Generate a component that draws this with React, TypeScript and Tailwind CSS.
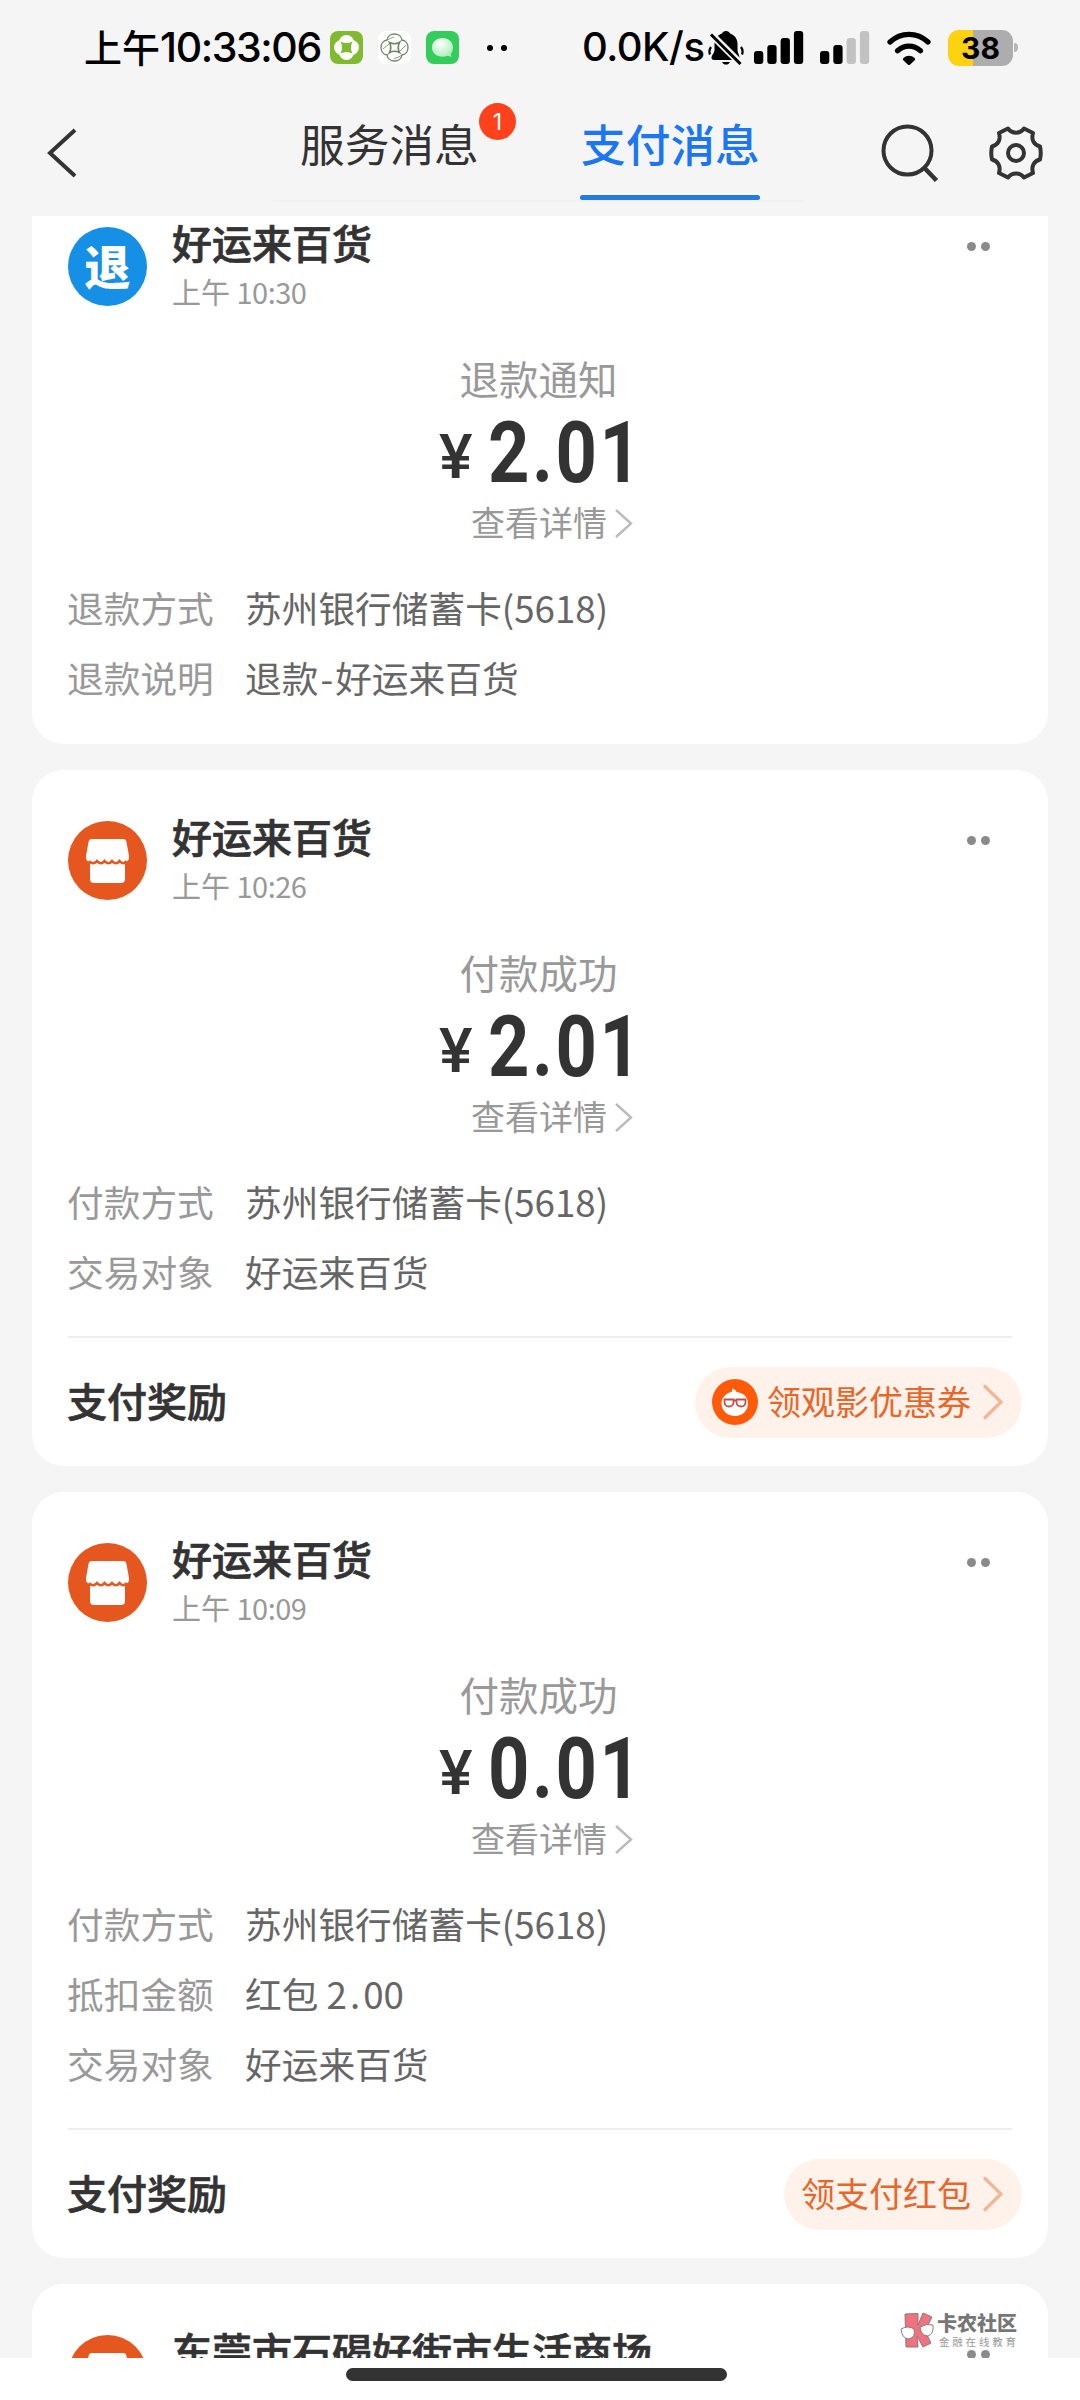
import React from 'react';

interface DetailRow {
  label: string;
  value: string;
}

interface Message {
  kind: 'refund' | 'shop';
  title: string;
  time: string;
  status: string;
  amount: string;
  rows: DetailRow[];
  reward?: { text: string; withLogo?: boolean };
}

const CARD = '苏州银行储蓄卡(5618)';
const SHOP = '好运来百货';

const messages: Message[] = [
  {
    kind: 'refund',
    title: SHOP,
    time: '10:30',
    status: '退款通知',
    amount: '2.01',
    rows: [
      { label: '退款方式', value: CARD },
      { label: '退款说明', value: '退款-好运来百货' },
    ],
  },
  {
    kind: 'shop',
    title: SHOP,
    time: '10:26',
    status: '付款成功',
    amount: '2.01',
    rows: [
      { label: '付款方式', value: CARD },
      { label: '交易对象', value: SHOP },
    ],
    reward: { text: '领观影优惠券', withLogo: true },
  },
  {
    kind: 'shop',
    title: SHOP,
    time: '10:09',
    status: '付款成功',
    amount: '0.01',
    rows: [
      { label: '付款方式', value: CARD },
      { label: '抵扣金额', value: '红包 2.00' },
      { label: '交易对象', value: SHOP },
    ],
    reward: { text: '领支付红包' },
  },
];

const SignalBars: React.FC<{ level: number }> = ({ level }) => (
  <svg width="50" height="34" viewBox="0 0 50 34">
    {[13, 19, 26, 33].map((h, i) => (
      <rect key={h} x={i * 13.3} y={33 - h} width="9.3" height={h} rx="3" fill={i < level ? '#000' : '#c2c2c2'} />
    ))}
  </svg>
);

const StatusBar = () => (
  <div className="flex h-[95px] shrink-0 items-center pl-[84px] text-black">
    <div className="flex w-[246px] items-center whitespace-nowrap font-medium">
      <span className="pb-[4px] text-[38px] leading-[48px]">上午</span>
      <span className="pb-[1px] font-['Inter'] text-[41px] leading-[48px] tracking-[-1.4px]">10:33:06</span>
    </div>
    <svg width="33" height="33" viewBox="0 0 33 33">
      <rect width="33" height="33" rx="8" fill="#80bb2f" />
      <circle cx="16.500" cy="11.500" r="7.500" fill="#fff" />
      <circle cx="16.500" cy="21.500" r="7.500" fill="#fff" />
      <circle cx="11.500" cy="16.500" r="7.500" fill="#fff" />
      <circle cx="21.500" cy="16.500" r="7.500" fill="#fff" />
      <path d="M10.500 10.500q6 3 12 0q-3 6 0 12q-6-3-12 0q3-6 0-12z" fill="#80bb2f" />
    </svg>
    <svg className="ml-[15px]" width="33" height="33" viewBox="0 0 33 33">
      <rect width="33" height="33" rx="8" fill="#fff" />
      <g fill="none" stroke="#6d8560" strokeWidth="1.300">
        <path d="M9 9C10 1 23 1 24 9C32 10 32 23 24 24C23 32 10 32 9 24C1 23 1 10 9 9z" />
        <path d="M11.500 11.500q5 2.500 10 0q-2.500 5 0 10q-5-2.500-10 0q2.500-5 0-10z" strokeWidth="1.600" />
        <path d="M9 9q4-2 7-3M24 9l-4 3M9 24l4-3M24 24q-4 3-8 3.500M5 18l6-5M28 14l-6 6" strokeWidth=".8" />
      </g>
    </svg>
    <svg className="ml-[15px]" width="33" height="33" viewBox="0 0 33 33">
      <defs>
        <radialGradient id="bubble" cx=".4" cy=".3" r=".8">
          <stop offset="0" stopColor="#fff" />
          <stop offset="1" stopColor="#a5ecb4" />
        </radialGradient>
      </defs>
      <rect width="33" height="33" rx="8" fill="#33cd5c" />
      <path d="M16.500 7c6 0 10.500 4 10.500 9.500 0 2.500-.8 4.600-2.200 6.200l.7 3.300-3.800-1.200c-1.500.6-3.300 1-5.200 1C10.500 25.800 6 22 6 16.500S10.500 7 16.500 7z" fill="url(#bubble)" />
    </svg>
    <div className="ml-[28px] flex gap-[8px]">
      <span className="size-[6px] rounded-full bg-black" />
      <span className="size-[6px] rounded-full bg-black" />
    </div>
    <span className="ml-[75px] w-[126px] whitespace-nowrap pb-[1px] font-['Inter'] text-[40px] leading-[48px] font-medium tracking-[-0.5px]">0.0K/s</span>
    <svg className="shrink-0" width="36" height="34" viewBox="0 0 36 34">
      <path d="M18 0c2 0 3.400 1 4 2.600C27 4.500 29.500 8 29.500 13v6c0 3 2 5 2 7.500 0 1.500-.8 2.500-2.500 2.500H6C4.300 29 3.500 28 3.500 26.500 3.500 24 6.500 22 6.500 19v-6c0-5 2.500-8.500 7.500-10.400C14.600 1 16 0 18 0zM14 31h8c-.8 1.600-2.200 2.600-4 2.600s-3.200-1-4-2.600z" />
      <path d="M3 16c-1.800 2.500-2 5-1 7.500M33 16c1.800 2.500 2 5 1 7.500" stroke="#000" strokeWidth="2.200" fill="none" />
      <path d="M2 2l32 32" stroke="#f5f5f5" strokeWidth="7" />
      <path d="M3 3.500l29.500 29.500" stroke="#000" strokeWidth="3" />
    </svg>
    <div className="ml-[10px] flex shrink-0 gap-[16px]">
      <SignalBars level={4} />
      <SignalBars level={2} />
    </div>
    <svg className="ml-[17px] shrink-0" width="44" height="34" viewBox="0 0 44 34">
      <g fill="none" stroke="#000" strokeWidth="5.200" strokeLinecap="round">
        <path d="M3 11c11-10.200 27-10.200 38 0" />
        <path d="M10.500 19.800c7-6.200 16-6.200 23 0" />
      </g>
      <path d="M16.500 27c3.500-3 7.500-3 11 0 .8.800.8 1.600.2 2.300l-4.200 4c-1 1-2 1-3 0l-4.200-4c-.6-.7-.6-1.500.2-2.300z" />
    </svg>
    <div className="ml-[17px] flex h-[36px] w-[65px] shrink-0 items-center justify-center rounded-[11px] bg-linear-to-r from-[#fdd20f] from-38% to-[#adadad] to-38%">
      <span className="font-['Inter'] text-[30px] leading-[36px] font-bold">38</span>
    </div>
    <span className="ml-[1px] h-[9px] w-[4px] rounded-r-full bg-[#b5b5b5]" />
  </div>
);

const NavBar = () => (
  <div className="flex h-[121px] shrink-0 items-start whitespace-nowrap">
    <svg className="mt-[33px] ml-[46px] w-[32px]" height="50" viewBox="0 0 32 50">
      <path d="M29 2L4 25l25 23" fill="none" stroke="#333" strokeWidth="4" />
    </svg>
    <div className="ml-[195px] flex w-[530px] border-b-2 border-[#f1f1f1] pl-[27px] text-[44.700px]">
      <div className="relative h-[105px] w-[180px] pt-[15px] leading-[66px] text-[#333]">
        服务消息
        <span className="absolute top-[8px] left-[179px] flex size-[37px] items-center justify-center rounded-full bg-[#ff411c] font-['Inter'] text-[23px] text-white">1</span>
      </div>
      <div className="ml-[100px] flex h-[105px] w-[180px] flex-col justify-between pt-[15px] text-[#1a76f2]">
        <span className="pl-[1px] leading-[66px] font-medium">支付消息</span>
        <span className="h-[5px] rounded-full bg-[#247bdd]" />
      </div>
    </div>
    <svg className="mt-[28px] ml-[78px]" width="60" height="60" viewBox="0 0 60 60">
      <circle cx="26.500" cy="27.500" r="24" fill="none" stroke="#333" strokeWidth="4" />
      <path d="M43.500 45l12 12.500" stroke="#333" strokeWidth="4.500" />
    </svg>
    <svg className="mt-[29px] ml-[46px]" width="58" height="58" viewBox="-29 -29 58 58" fill="none" stroke="#333" strokeWidth="4" strokeLinejoin="round">
      <path d="M-8-24.500C-4-19 4-19 8-24.500L17-20C15-13 18-8 24-6.500Q25.500 0 24 6.500C18 8 15 13 17 20L8 24.500C4 19-4 19-8 24.500L-17 20C-15 13-18 8-24 6.500Q-25.500 0-24-6.500C-18-8-15-13-17-20z" />
      <circle r="8" />
    </svg>
  </div>
);

const Avatar: React.FC<{ kind: Message['kind'] }> = ({ kind }) =>
  kind === 'refund' ? (
    <div className="mt-[51px] flex size-[79px] items-center justify-center rounded-full bg-[#168fe6] pb-[5px] text-[46px] font-black text-white">退</div>
  ) : (
    <svg className="mt-[51px]" width="79" height="79" viewBox="0 0 79 79">
      <circle cx="39.500" cy="39.500" r="39.500" fill="#e5571e" />
      <path d="M24 18h31q3 0 3.500 3l2.500 14q.6 6-5 6H23q-5.600 0-5-6l2.500-14q.500-3 3.500-3z" fill="#fff" />
      <path d="M22 40h35v18q0 4-4 4H26q-4 0-4-4z" fill="#fff" />
      <path d="M21 40q4 4.500 8 0q4 4.500 7.500 0q4 4.500 7.500 0q4 4.500 7.500 0q4 4.500 7 0" fill="none" stroke="#e5571e" strokeWidth="2.600" />
    </svg>
  );

const CardHeader: React.FC<{ kind: Message['kind']; title: string; time?: string }> = ({ kind, title, time }) => (
  <div className="flex h-[175px] items-start pr-[58px] pl-[36px]">
    <Avatar kind={kind} />
    <div className="ml-[25px] grow pt-[43px]">
      <h3 className="text-[40px] leading-[46px] font-medium text-[#333] [-webkit-text-stroke:0.7px_#333]">{title}</h3>
      {time && (
        <p className="mt-[8px] text-[29px] leading-[36px] text-[#999]">
          上午 <span className="tracking-[-0.5px]">{time}</span>
        </p>
      )}
    </div>
    <div className="flex gap-[5px] pt-[66px]">
      <span className="size-[9px] rounded-full bg-[#8a8a8a]" />
      <span className="size-[9px] rounded-full bg-[#8a8a8a]" />
    </div>
  </div>
);

const RewardLogo = () => (
  <svg className="mr-[9px]" width="46" height="46" viewBox="0 0 46 46">
    <circle cx="23" cy="23" r="23" fill="#ff5a0a" />
    <path d="M20 9.500q3.500.5 4.500 3.500c7 .6 11.500 5 11.500 11.500 0 7-5.500 12.500-13 12.500S9.500 31.500 9.500 24.500c0-6 4.500-10.500 10-11.500q1-1.500.5-3.500z" fill="#fff" />
    <g fill="none" stroke="#c0504d" strokeWidth="1.800">
      <path d="M12.500 20.500h9v3q-.5 4-4.500 4t-4.500-4z" />
      <path d="M24.500 20.500h9v3q-.5 4-4.500 4t-4.500-4zM21.500 21.500h3" />
    </g>
  </svg>
);

// dashes and decimal points get a bit of air on both sides
const RowValue: React.FC<{ text: string }> = ({ text }) => (
  <span className="whitespace-pre text-[#666]">
    {text.split(/([-.])/).map((part, i) =>
      i % 2 ? (
        <span key={i} className={part === '.' ? 'px-[3px]' : 'px-[2px]'}>
          {part}
        </span>
      ) : (
        part
      ),
    )}
  </span>
);

const MessageCard: React.FC<{ message: Message }> = ({ message }) => (
  <section className="shrink-0 rounded-[32px] bg-white">
    <CardHeader kind={message.kind} title={message.title} time={message.time} />
    <div className="flex flex-col items-center">
      <p className="h-[56px] pr-[3px] text-[39.500px] leading-[54px] text-[#999]">{message.status}</p>
      <div className="flex h-[88px] w-[202px] items-center pt-[4px] text-[#333]">
        <span className="w-[49px] shrink-0 origin-left scale-x-[1.02] pt-[7px] font-['Roboto'] text-[62px] leading-none font-medium">¥</span>
        <span className="origin-left scale-x-[.84] font-['Roboto'] text-[86px] leading-[80px] font-bold tracking-[3px]">{message.amount}</span>
      </div>
      <div className="flex h-[56px] items-center pl-[25px] text-[34px] leading-[46px] text-[#999]">
        <span className="pb-[3px]">查看详情</span>
        <svg className="ml-[7px]" width="20" height="32" viewBox="0 0 20 32">
          <path d="M2 3l15 13.500L2 30" fill="none" stroke="#bbb" strokeWidth="2.400" />
        </svg>
      </div>
    </div>
    <div className={`mt-[23px] ${message.reward ? 'pb-[28px]' : 'pb-[30px]'}`}>
      {message.rows.map((row) => (
        <div key={row.label} className="flex h-[70px] items-center pb-[2px] pl-[35px] text-[36.700px]">
          <span className="w-[178px] text-[#999]">{row.label}</span>
          <RowValue text={row.value} />
        </div>
      ))}
    </div>
    {message.reward && (
      <>
        <div className="mx-[36px] h-[2px] bg-[#eee]" />
        <div className="flex h-[128px] items-center justify-between pr-[26px] pl-[35px]">
          <span className="pb-[4px] text-[40px] font-medium text-[#333] [-webkit-text-stroke:0.7px_#333]">支付奖励</span>
          <div className="flex h-[71px] items-center rounded-full bg-[#fff2eb] pr-[17px] pl-[17px]">
            {message.reward.withLogo && <RewardLogo />}
            <span className="pb-[3px] text-[34px] text-[#e9662a]">{message.reward.text}</span>
            <svg className="ml-[10px]" width="24" height="40" viewBox="0 0 24 40">
              <path d="M3 3.500l17 16.500L3 36.500" fill="none" stroke="#f2b597" strokeWidth="3.200" />
            </svg>
          </div>
        </div>
      </>
    )}
  </section>
);

const Watermark = () => (
  <div className="absolute top-[2311px] left-[900px] flex items-start gap-px">
    <svg width="36" height="38" viewBox="0 0 36 38">
      <g fill="#f0727f" stroke="#8a7a7c" strokeWidth="1">
        <path d="M5 3l13-.5V14l5-12 9 4-7 14 6 12-8 4-6-11 1 11H6z" />
        <g fill="#fff">
          <path d="M1 18q7-4 13 0q2 8-5 10q-7 0-8-10z" />
          <path d="M20 16q7-4 13-2q1 9-5 11q-7 0-8-9z" />
        </g>
      </g>
    </svg>
    <div className="flex flex-col">
      <span className="text-[20px] leading-[24px] font-black text-[#777]">卡农社区</span>
      <span className="pl-[2px] text-[10.500px] leading-[14px] tracking-[2.800px] text-[#999]">金融在线教育</span>
    </div>
  </div>
);

export default function App() {
  return (
    <div className="relative flex h-[2400px] w-[1080px] flex-col overflow-hidden bg-[#f5f5f5] font-['Noto_Sans_CJK_SC',sans-serif]">
      <StatusBar />
      <NavBar />
      {/* scrolled list, first card is cut by the nav bar */}
      <main className="h-[2142px] shrink-0 overflow-hidden px-[32px]">
        <div className="-mt-[40px] flex flex-col gap-[26px]">
          {messages.map((m) => (
            <MessageCard key={m.time} message={m} />
          ))}
          <section className="h-[300px] rounded-[32px] bg-white">
            <CardHeader kind="shop" title="东莞市石碣好街市生活商场" />
          </section>
        </div>
      </main>
      <div className="flex h-[42px] justify-center bg-white pt-[10px] pr-[7px]">
        <div className="h-[13px] w-[381px] rounded-full bg-[#333]" />
      </div>
      <Watermark />
    </div>
  );
}
